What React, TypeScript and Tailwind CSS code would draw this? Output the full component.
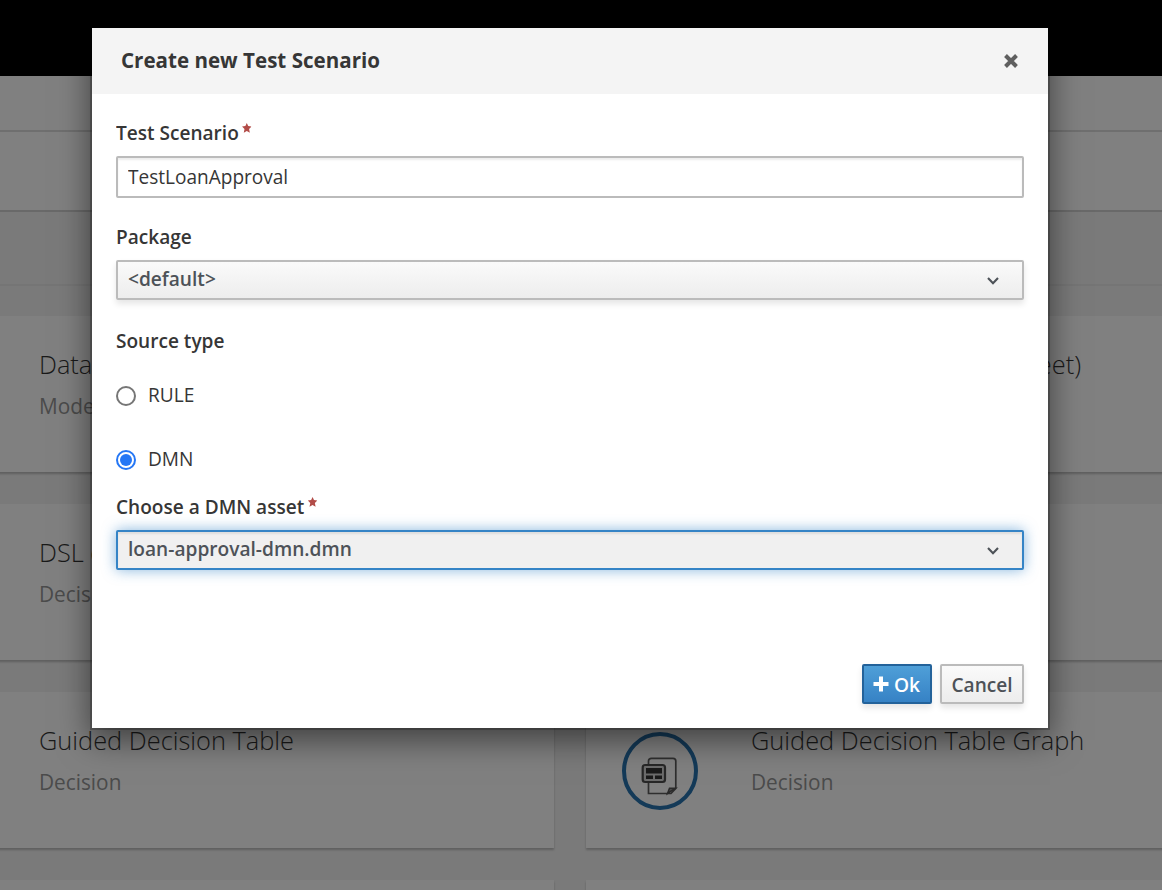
import React from "react";

type Asset = { title?: string; kind?: string; icon?: boolean };

const rows: [Asset, Asset][] = [
  [{ title: "Data", kind: "Model" }, { title: "Decision Table (Spreadsheet)" }],
  [{ title: "DSL d", kind: "Decision" }, {}],
  [
    { title: "Guided Decision Table", kind: "Decision" },
    { title: "Guided Decision Table Graph", kind: "Decision", icon: true },
  ],
  [{}, {}],
];

function TableGraphIcon() {
  return (
    <svg className="block h-[78px] w-[76px]" viewBox="0 0 76 78" fill="none">
      <ellipse cx="38" cy="39" rx="36" ry="37" stroke="#143a58" strokeWidth="4" />
      <path
        d="M26.500 32V29Q26.500 26.300 29.500 26.300H51Q53.800 26.300 53.800 29V56.500L49 61.500H26.500V51"
        stroke="#2e2e2e"
        strokeWidth="1.700"
      />
      <path d="M45.500 61.500L47.500 56.200H53.500Z" fill="#4a4a4a" stroke="#2a2a2a" strokeWidth="1.500" />
      <rect x="20.700" y="33" width="22.300" height="17" rx="2.500" fill="#6c6c6c" stroke="#272727" strokeWidth="2.200" />
      <path d="M24 36H40V41.500H24ZM24 43.500H31V47H24ZM33 43.500H40V47H33Z" fill="#1b1b1b" />
    </svg>
  );
}

function AssetCard({ asset }: { asset: Asset }) {
  return (
    <div className="flex h-[156px] bg-[#808080] shadow-[0_2px_2px_rgba(0,0,0,0.22)]">
      <div className="w-[165px] shrink-0 pl-9 pt-10">{asset.icon && <TableGraphIcon />}</div>
      <div className="whitespace-nowrap pt-[30px]">
        <div className="h-9 origin-left scale-x-[0.976] text-[26px] font-light leading-9 text-[#191919]">
          {asset.title}
        </div>
        <div className="mt-2 origin-left scale-x-[0.945] text-[22px] leading-[30px] text-[#4b4b4b]">{asset.kind}</div>
      </div>
    </div>
  );
}

function Backdrop() {
  return (
    <div className="col-start-1 row-start-1 h-[890px] overflow-hidden bg-[#7a7a7a]">
      <div className="h-[76px] bg-black" />
      <div className="h-14 border-b-2 border-[#6f6f6f] bg-[#808080]" />
      <div className="h-20 border-b-2 border-[#696969] bg-[#808080]" />
      <div className="h-[74px] border-b-2 border-[#757575]" />
      <div className="-ml-[126px] mt-[30px] grid grid-cols-[680px_680px] gap-8">
        {rows.flat().map((asset, i) => (
          <AssetCard key={i} asset={asset} />
        ))}
      </div>
    </div>
  );
}

function Label({ children, required }: { children: React.ReactNode; required?: boolean }) {
  return (
    <div className="flex h-7 origin-left scale-x-[0.953] items-center text-[20px] font-semibold leading-7 text-[#363636]">
      {children}
      {required && (
        <svg className="mb-2.5 ml-[3px] h-[10px] w-[10.500px]" viewBox="0 0 10 10" fill="#b24c48">
          <path d="M5 0L6.500 3.100L10 3.500L7.400 6L8.200 9.700L5 7.900L1.800 9.700L2.600 6L0 3.500L3.500 3.100Z" />
        </svg>
      )}
    </div>
  );
}

function SelectBox({ value, focused }: { value: string; focused?: boolean }) {
  return (
    <button
      className={
        "flex h-10 w-full items-center justify-between rounded-[2px] border-2 pl-[9.500px] pr-[22px] text-[20px] font-semibold leading-7 text-[#4d5258] " +
        (focused
          ? "border-[#3584c6] bg-[#f0f0f0] shadow-[inset_0_2px_2px_rgba(0,0,0,0.075),0_0_14px_rgba(53,132,198,0.6)]"
          : "border-[#bbb] bg-linear-to-b from-[#fafafa] to-[#ededed] shadow-[0_4px_6px_rgba(3,3,3,0.1)]")
      }
    >
      <span className="-mt-0.5 origin-left scale-x-[0.956]">{value}</span>
      <svg className="mt-0.5 h-3 w-[14px]" viewBox="0 0 14 12" fill="none" stroke="#4d5258" strokeWidth="2.100">
        <path d="M2 3L7 8.300L12 3" />
      </svg>
    </button>
  );
}

function Radio({ label, checked }: { label: string; checked?: boolean }) {
  return (
    <div className="flex h-7 items-center gap-3 text-[20px] leading-7 text-[#363636]">
      <svg className="mt-0.5 h-5 w-5" viewBox="0 0 20 20" fill="#fff">
        <circle cx="10" cy="10" r="9" stroke={checked ? "#2577f5" : "#767676"} strokeWidth="2" />
        {checked && <circle cx="10" cy="10" r="6" fill="#2577f5" />}
      </svg>
      <span className="origin-left scale-x-[0.955]">{label}</span>
    </div>
  );
}

function Modal() {
  return (
    <div className="z-10 col-start-1 row-start-1 ml-[92px] mt-7 flex h-[700px] w-[956px] flex-col bg-white shadow-[0_0_0_2px_rgba(0,0,0,0.22),0_10px_30px_2px_rgba(0,0,0,0.5)]">
      <div className="flex h-[66px] shrink-0 items-center justify-between bg-[#f4f4f4] pl-[29px] pr-[30px]">
        <h1 className="-mt-[5px] origin-left scale-x-[0.935] text-[22px] font-bold leading-[30px] text-[#363636]">
          Create new Test Scenario
        </h1>
        <svg className="h-[14px] w-[14px]" viewBox="0 0 14 14" stroke="#5f5f5f" strokeWidth="4">
          <path d="M1.500 1.500L12.500 12.500M12.500 1.500L1.500 12.500" />
        </svg>
      </div>
      <div className="flex flex-1 flex-col px-6 pt-[25px]">
        <Label required>Test Scenario</Label>
        <div className="mt-[9px] flex h-[42px] items-center rounded-[2px] border-2 border-[#bbb] pl-[9.500px] text-[20px] text-[#363636] shadow-[inset_0_2px_2px_rgba(0,0,0,0.075)]">
          <span className="origin-left scale-x-[0.952]">TestLoanApproval</span>
        </div>
        <div className="mb-[9px] mt-[25px]">
          <Label>Package</Label>
        </div>
        <SelectBox value="<default>" />
        <div className="mt-[27px]">
          <Label>Source type</Label>
        </div>
        <div className="mt-[26px] flex flex-col gap-9">
          <Radio label="RULE" />
          <Radio label="DMN" checked />
        </div>
        <div className="mb-[9px] mt-5">
          <Label required>Choose a DMN asset</Label>
        </div>
        <SelectBox value="loan-approval-dmn.dmn" focused />
        <div className="mt-auto flex justify-end gap-2 pb-6 text-[20px] font-semibold">
          <button className="flex h-10 w-[70px] items-center gap-1 rounded-[2px] border-2 border-[#23629a] bg-linear-to-b from-[#4f9fd8] to-[#3682c5] pl-[9px] text-white shadow-[0_4px_6px_rgba(3,3,3,0.1)]">
            <svg className="h-4 w-4" viewBox="0 0 16 16" stroke="#fff" strokeWidth="4" strokeLinejoin="round">
              <path d="M8 .5V15.500M.5 8H15.500" />
            </svg>
            <span className="origin-left scale-x-[0.96] pl-px pt-0.5">Ok</span>
          </button>
          <button className="h-10 w-[84px] rounded-[2px] border-2 border-[#bbb] bg-linear-to-b from-[#fafafa] to-[#ededed] pt-0.5 text-[#4d5258] shadow-[0_4px_6px_rgba(3,3,3,0.1)]">
            <span className="inline-block scale-x-[0.955]">Cancel</span>
          </button>
        </div>
      </div>
    </div>
  );
}

export default function App() {
  return (
    <div className="grid h-[890px] w-[1162px] grid-cols-1 overflow-hidden font-['Open_Sans',sans-serif]">
      <Backdrop />
      <Modal />
    </div>
  );
}
